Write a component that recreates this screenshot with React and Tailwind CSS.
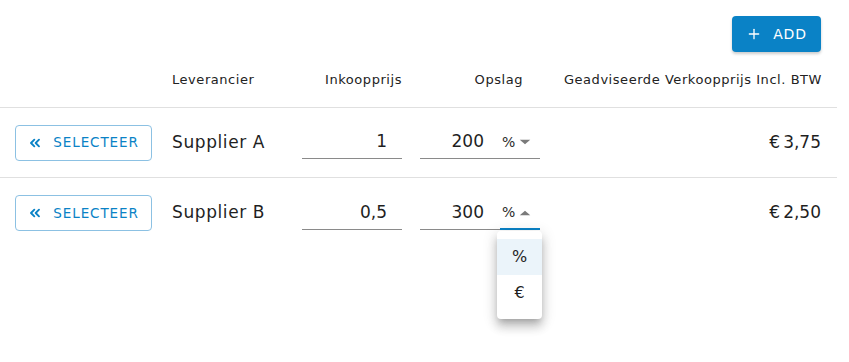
import { Plus, ChevronsLeft } from 'lucide-react';

const suppliers = [
  { name: 'Supplier A', price: '1', markup: '200', total: '3,75', open: false },
  { name: 'Supplier B', price: '0,5', markup: '300', total: '2,50', open: true },
];

function Caret({ up }) {
  return (
    <svg width="14" height="12" viewBox="0 0 12 10" className="text-[#7a7a7a]">
      {up ? <path d="M1.5 7 L6 3 L10.5 7 Z" fill="currentColor" /> : <path d="M1.5 3 L6 7 L10.5 3 Z" fill="currentColor" />}
    </svg>
  );
}

function Row({ row, last }) {
  return (
    <div className={`flex items-center h-[70px] px-[15px] ${last ? '' : 'border-b border-[#e0e0e0]'}`}>
      <button className="w-[137px] h-[36px] flex items-center justify-center gap-[10px] pr-[1px] border border-[#8cc1e3] rounded-[4px] text-[#0a82c6] text-[13.5px] tracking-[0.9px]">
        <ChevronsLeft size={16} strokeWidth={2.8} />
        SELECTEER
      </button>
      <div className="w-[130px] ml-[20px] text-[17px] tracking-[0.6px] text-[#1f1f1f]">{row.name}</div>
      <div className="w-[100px] h-[33px] flex items-center justify-end pr-[15px] border-b border-[#8a8a8a] text-[17px] text-[#1f1f1f]">
        {row.price}
      </div>
      <div className="relative w-[120px] ml-[18px] h-[33px] flex items-center border-b border-[#8a8a8a]">
        <div className="w-[64px] text-right text-[17px] text-[#1f1f1f]">{row.markup}</div>
        <div className="ml-[18px] flex items-center gap-[3px] text-[14px] text-[#2a2a2a]">
          %
          <Caret up={row.open} />
        </div>
        {row.open && <div className="absolute left-[80px] right-0 bottom-[-1px] h-[2px] bg-[#0a82c6]" />}
        {row.open && (
          <div className="absolute left-[77px] top-[34px] w-[45px] py-[8px] bg-white rounded-[4px] shadow-[0_5px_6px_-3px_rgba(0,0,0,0.2),0_8px_10px_1px_rgba(0,0,0,0.14),0_3px_14px_2px_rgba(0,0,0,0.12)] z-10">
            <div className="h-[36px] flex items-center justify-center bg-[#ebf4fa] text-[16px] text-[#1f1f1f]">%</div>
            <div className="h-[36px] flex items-center justify-center text-[16px] text-[#1f1f1f]">€</div>
          </div>
        )}
      </div>
      <div className="flex-1 text-right text-[17px] text-[#1f1f1f] pr-[1px]">
        <span className="mr-[3px]">€</span>{row.total}
      </div>
    </div>
  );
}

export default function App() {
  return (
    <div className="w-[849px] h-[362px] bg-white pt-4" style={{ fontFamily: '"DejaVu Sans", sans-serif' }}>
      <div className="flex justify-end pr-[28px]">
        <button className="h-[36px] w-[89px] flex items-center justify-center gap-[11px] rounded-[4px] bg-[#0a82c6] text-white text-[14px] tracking-[0.8px] shadow-[0_2px_3px_rgba(0,0,0,0.2)]">
          <Plus size={16} strokeWidth={2} />
          ADD
        </button>
      </div>
      <div className="w-[837px]">
        <div className="flex items-center h-[56px] px-[15px] border-b border-[#e0e0e0] text-[13px] tracking-[0.55px] text-[#222]">
          <div className="w-[137px]" />
          <div className="w-[130px] ml-[20px]">Leverancier</div>
          <div className="w-[100px] text-right">Inkoopprijs</div>
          <div className="w-[103px] ml-[18px] text-right">Opslag</div>
          <div className="flex-1 text-right">Geadviseerde Verkoopprijs Incl. BTW</div>
        </div>
        {suppliers.map((row, i) => (
          <Row key={row.name} row={row} last={i === suppliers.length - 1} />
        ))}
      </div>
    </div>
  );
}
